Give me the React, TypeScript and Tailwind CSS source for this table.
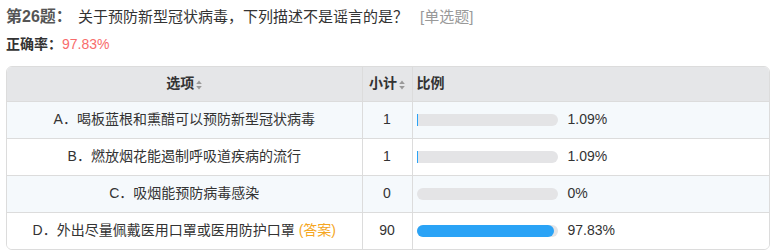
import React from 'react'

const options = [
  { label: 'A．喝板蓝根和熏醋可以预防新型冠状病毒', count: 1, pct: 1.09, answer: false },
  { label: 'B．燃放烟花能遏制呼吸道疾病的流行', count: 1, pct: 1.09, answer: false },
  { label: 'C．吸烟能预防病毒感染', count: 0, pct: 0, answer: false },
  { label: 'D．外出尽量佩戴医用口罩或医用防护口罩', count: 90, pct: 97.83, answer: true },
]

const font = { fontFamily: '"Liberation Sans", Arial, "Noto Sans CJK SC", sans-serif' }

function SortIcon() {
  return (
    <svg width="6" height="10" viewBox="0 0 6 10" className="ml-[2px] inline-block">
      <path d="M3 0.5 L5.8 4 L0.2 4 Z" fill="#999" />
      <path d="M3 9.5 L5.8 6 L0.2 6 Z" fill="#999" />
    </svg>
  )
}

// progress bar: tiny values show as a thin line over a square-left track
function Bar({ pct }: { pct: number }) {
  const w = (141 * pct) / 100
  const thin = pct > 0 && w < 12
  return (
    <div className="flex items-center">
      <div className={`relative h-[12px] w-[141px] bg-[#e4e4e6] ${thin ? 'rounded-r-full' : 'rounded-full'}`}>
        {pct > 0 && (
          <div
            className={`absolute left-0 top-0 h-full bg-[#2aa3f6] ${thin ? '' : 'rounded-full'}`}
            style={{ width: Math.max(w, 1.5) }}
          />
        )}
      </div>
      <span className="ml-[10px] text-[14px] text-[#333]">{pct}%</span>
    </div>
  )
}

export default function App() {
  return (
    <div className="w-[774px] h-[251px] bg-white px-[6px] text-[14px] text-[#333]" style={font}>
      <div className="h-[34px] flex items-center text-[15px]">
        <span className="font-bold text-[16px] text-[#555] w-[72px]">第26题：</span>
        <span>关于预防新型冠状病毒，下列描述不是谣言的是？</span>
        <span className="ml-[12px] text-[#999]">[单选题]</span>
      </div>
      <div className="h-[20px] flex items-center">
        <span className="font-bold">正确率：</span>
        <span className="text-[#f86c6c]">97.83%</span>
      </div>
      <div className="mt-[12px] w-[764px] border border-[#dcdcdc] rounded-[6px] overflow-hidden">
        <table className="w-full border-collapse">
          <thead>
            <tr className="bg-[#e5e6e8] h-[34px]">
              <th className="w-[355px] border-r border-[#dcdcdc] font-bold text-center">
                选项<SortIcon />
              </th>
              <th className="w-[50px] border-r border-[#dcdcdc] font-bold text-center">
                小计<SortIcon />
              </th>
              <th className="font-bold text-left pl-[4px]">比例</th>
            </tr>
          </thead>
          <tbody>
            {options.map((o, i) => (
              <tr key={o.label} className={`h-[37px] border-t border-[#dcdcdc] ${i % 2 === 0 ? 'bg-[#f5f9fc]' : 'bg-white'}`}>
                <td className="border-r border-[#dcdcdc] text-center">
                  {o.label}
                  {o.answer && <span className="ml-[4px] text-[#f5a623]">(答案)</span>}
                </td>
                <td className="border-r border-[#dcdcdc] text-center">{o.count}</td>
                <td className="pl-[4px]">
                  <Bar pct={o.pct} />
                </td>
              </tr>
            ))}
          </tbody>
        </table>
      </div>
    </div>
  )
}
